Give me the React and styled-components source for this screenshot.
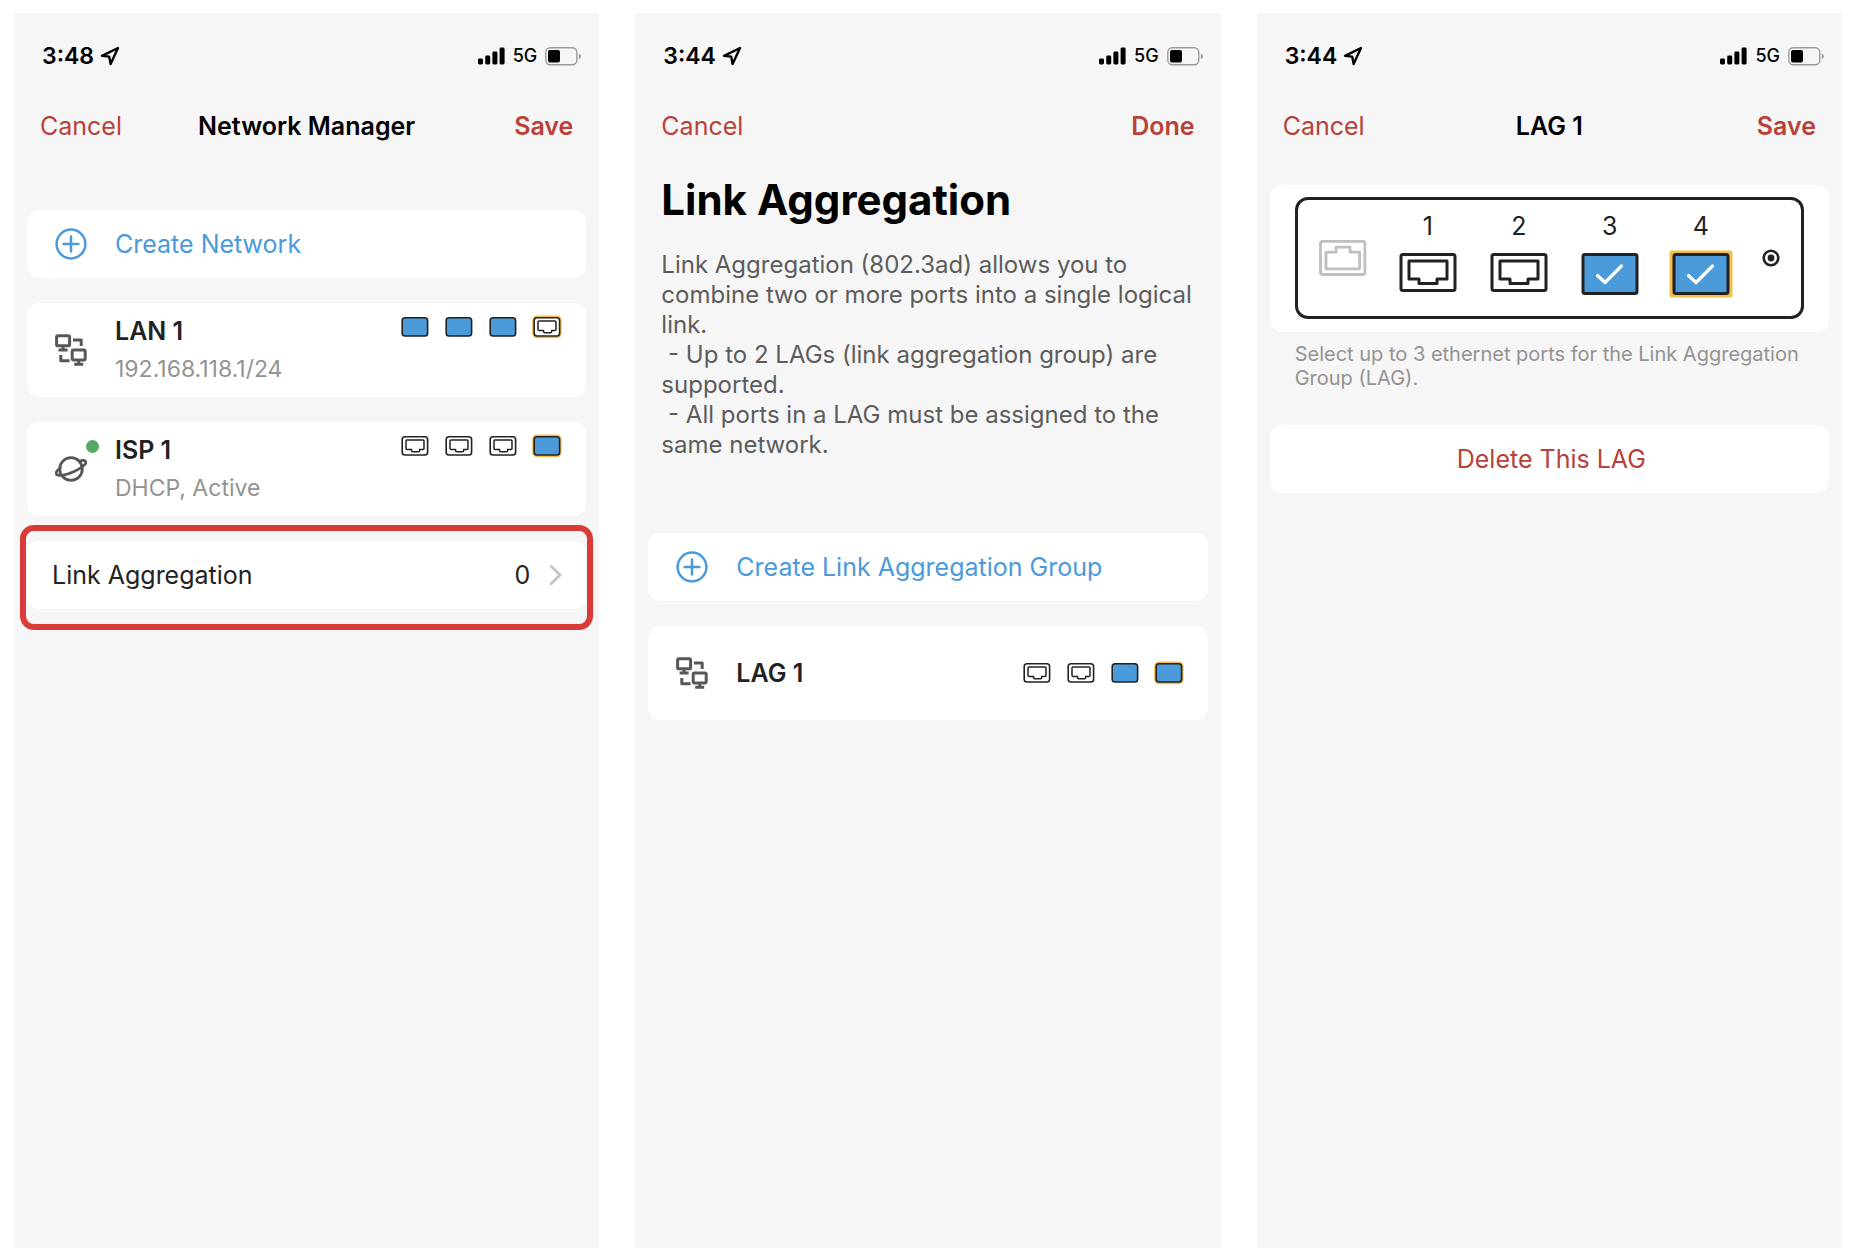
import React, { useState } from 'react'
import styled, { createGlobalStyle, ThemeProvider } from 'styled-components'

const theme = {
    surface: '#f6f6f6',
    card: '#ffffff',
    ink: '#222222',
    body: '#5c5c5c',
    muted: '#939393',
    icon: '#575757',
    red: '#b8413a',
    blue: '#4b9ada',
    yellow: '#f5bd4a',
    green: '#56a867',
    highlight: '#da3a38',
}

const GlobalStyle = createGlobalStyle`
    *, *::before, *::after {
        box-sizing: border-box;
    }
    body {
        margin: 0;
        background: #fff;
        font-family: Inter, 'Liberation Sans', sans-serif;
        font-size: 25px;
        line-height: 30px;
    }
    button {
        font: inherit;
        color: inherit;
        text-align: left;
        border: 0;
        padding: 0;
        background: none;
        cursor: pointer;
    }
    svg {
        display: block;
        flex: none;
    }
`

const Page = styled.main`
    display: grid;
    grid-template-columns: repeat(3, minmax(0, 1fr));
    gap: 36px;
    min-height: 100vh;
    padding: 13px 14px 0;
`

const Phone = styled.section`
    display: flex;
    flex-direction: column;
    background: ${props => props.theme.surface};
    color: ${props => props.theme.ink};
`

const StatusRow = styled.div`
    display: flex;
    align-items: center;
    justify-content: space-between;
    height: 86px;
    padding: 0 18px 0 28px;
    color: #000;
`

const Clock = styled.div`
    display: flex;
    align-items: center;
    gap: 6px;
    font-size: 23px;
    font-weight: 600;
`

const Signal = styled.div`
    display: flex;
    align-items: center;
    gap: 8px;
    font-size: 18px;
    font-weight: 500;
`

const NavBar = styled.header`
    display: grid;
    grid-template-columns: 1fr auto 1fr;
    align-items: center;
    height: 54px;
    padding: 0 26px;
`

const NavTitle = styled.h2`
    margin: 0;
    font-size: 25px;
    font-weight: 600;
    color: #000;
`

const NavButton = styled.button`
    justify-self: ${props => (props.$strong ? 'end' : 'start')};
    font-weight: ${props => (props.$strong ? 600 : 400)};
    color: ${props => props.theme.red};
`

const Content = styled.div`
    display: flex;
    flex-direction: column;
    gap: 25px;
    padding: ${props => props.$top}px 13px 0;
`

const Card = styled.div`
    border-radius: 12px;
    background: ${props => props.theme.card};
`

const RowButton = styled(Card).attrs({ as: 'button', type: 'button' })`
    display: flex;
    align-items: center;
    gap: 28px;
    width: 100%;
    min-height: ${props => (props.$tall ? 94 : 68)}px;
    padding: 0 24px 0 28px;
    color: ${props => (props.$accent ? props.theme.blue : props.theme.ink)};
`

const CountRow = styled(RowButton)`
    justify-content: space-between;
    padding-left: 25px;
`

const Count = styled.span`
    display: flex;
    align-items: center;
    gap: 19px;
`

const DeleteRow = styled(RowButton)`
    justify-content: center;
    color: ${props => props.theme.red};
`

const IconSlot = styled.span`
    position: relative;
`

const StatusDot = styled.span`
    position: absolute;
    top: -13px;
    right: -12px;
    width: 13px;
    height: 13px;
    border-radius: 50%;
    background: ${props => props.theme.green};
`

const RowText = styled.span`
    display: flex;
    flex: 1;
    flex-direction: column;
    gap: 8px;
`

const RowTitle = styled.span`
    font-weight: 600;
`

const RowSub = styled.span`
    font-size: 23px;
    color: ${props => props.theme.muted};
`

const PortList = styled.span`
    display: flex;
    gap: 14px;
    align-self: ${props => (props.$top ? 'flex-start' : 'center')};
    padding-top: ${props => (props.$top ? 12 : 0)}px;
`

const Highlight = styled.div`
    position: relative;
    &::after {
        content: '';
        position: absolute;
        inset: -16px -7px -21px;
        border: 6px solid ${props => props.theme.highlight};
        border-radius: 14px;
        pointer-events: none;
    }
`

const Intro = styled.div`
    padding: 23px 26px 48px;
`

const BigTitle = styled.h1`
    margin: 0 0 26px;
    font-size: 42px;
    line-height: 48px;
    font-weight: 700;
    color: #000;
`

const IntroText = styled.p`
    margin: 0;
    font-size: 24px;
    white-space: pre-line;
    color: ${props => props.theme.body};
`

const DeviceCard = styled(Card)`
    padding: 12px 25px 13px;
`

const Device = styled.fieldset`
    display: flex;
    align-items: center;
    justify-content: space-between;
    min-width: 0;
    height: 122px;
    margin: 0;
    padding: 0 21px;
    border: 3px solid ${props => props.theme.ink};
    border-radius: 13px;
`

const DevicePorts = styled.div`
    display: flex;
    gap: 27px;
    padding-bottom: 8px;
`

const PortToggle = styled.label`
    display: flex;
    flex-direction: column;
    align-items: center;
    gap: 9px;
    cursor: pointer;
`

const HiddenCheck = styled.input`
    position: absolute;
    opacity: 0;
    width: 1px;
    height: 1px;
    margin: 0;
`

const Hint = styled.p`
    margin: -15px 25px 10px;
    font-size: 20px;
    line-height: 24px;
    color: ${props => props.theme.muted};
`

function StatusBar({ time }) {
    return (
        <StatusRow>
            <Clock>
                <span>{time}</span>
                <svg width="20" height="20" viewBox="0 0 20 20" fill="none" stroke="#000" strokeWidth="2.4" strokeLinejoin="round">
                    <path d="M18 2 L2 9.8 L9.2 10.6 L10.6 18 Z" />
                </svg>
            </Clock>
            <Signal>
                <svg width="27" height="18" viewBox="0 0 27 18" fill="#000">
                    <rect x="0" y="11.5" width="5" height="6" rx="1.4" />
                    <rect x="7.2" y="8.5" width="5" height="9" rx="1.4" />
                    <rect x="14.4" y="4.5" width="5" height="13" rx="1.4" />
                    <rect x="21.6" y="0.5" width="5" height="17" rx="1.4" />
                </svg>
                <span>5G</span>
                <svg width="36" height="19" viewBox="0 0 36 19">
                    <rect x="0.8" y="0.8" width="31" height="17" rx="4.5" fill="none" stroke="#9c9c9c" strokeWidth="1.4" />
                    <rect x="3" y="3" width="12" height="12.6" rx="2" fill="#000" />
                    <path d="M33.8 6.4 Q36 7.4 36 9.3 Q36 11.2 33.8 12.2 Z" fill="#9c9c9c" />
                </svg>
            </Signal>
        </StatusRow>
    )
}

function Nav({ title, action }) {
    return (
        <NavBar>
            <NavButton type="button">Cancel</NavButton>
            {title ? <NavTitle>{title}</NavTitle> : <span />}
            <NavButton type="button" $strong>{action}</NavButton>
        </NavBar>
    )
}

function PlusIcon() {
    return (
        <svg width="32" height="32" viewBox="0 0 32 32" fill="none" stroke={theme.blue} strokeWidth="2.5" strokeLinecap="round">
            <circle cx="16" cy="16" r="14.4" />
            <path d="M16 8.6V23.4M8.6 16H23.4" />
        </svg>
    )
}

function NetworkIcon() {
    return (
        <svg width="32" height="32" viewBox="0 0 32 32" fill="none" stroke={theme.icon} strokeWidth="3" strokeLinejoin="round">
            <rect x="1.6" y="1.8" width="13" height="10" rx="1.4" />
            <path d="M8 11.8V15.6M3.6 16H12.6" />
            <rect x="17.2" y="16" width="13" height="10" rx="1.4" />
            <path d="M23.7 26V30M19.2 30.2H28.2" />
            <path d="M18 6H26.2V12M5.8 21V26.8H14.6" />
        </svg>
    )
}

function PlanetIcon() {
    return (
        <svg width="32" height="32" viewBox="0 0 32 32" fill="none" stroke={theme.icon} strokeWidth="2.8" strokeLinecap="round" strokeLinejoin="round">
            <circle cx="16" cy="16" r="11.3" />
            <path d="M5.2 15.2 C1.6 17.6 0.4 20 1.6 21.4 C3.8 23.4 11.6 22 18.6 18.8 C26.8 15 32 10.6 30.8 8.6 C29.8 7 27.6 7.2 24.6 8.2" />
        </svg>
    )
}

function ChevronIcon() {
    return (
        <svg width="13" height="22" viewBox="0 0 13 22" fill="none" stroke="#c4c4c6" strokeWidth="2.8">
            <path d="M1.4 1.4 L11 11 L1.4 20.6" />
        </svg>
    )
}

function SmallPort({ filled, uplink }) {
    return (
        <svg width="30" height="24" viewBox="0 0 30 24" fill="none" strokeLinejoin="round">
            {uplink && <rect x="0.2" y="0.6" width="29.4" height="22.6" rx="4.6" fill={theme.yellow} />}
            <rect x="2.2" y="2.8" width="25.4" height="18.2" rx="2.8" fill={filled ? theme.blue : '#fff'} stroke={theme.ink} strokeWidth="1.6" />
            {!filled && (
                <path d="M7 6H23Q24 6 24 7V14.6Q24 15.6 23 15.6H19.6V16.8Q19.6 17.8 18.6 17.8H12.6Q11.6 17.8 11.6 16.8V15.6H7Q6 15.6 6 14.6V7Q6 6 7 6Z" stroke={theme.ink} strokeWidth="1.5" />
            )}
        </svg>
    )
}

function Ports({ ports, top }) {
    return (
        <PortList $top={top}>
            {ports.map((filled, i) => (
                <SmallPort key={i} filled={filled} uplink={i === ports.length - 1} />
            ))}
        </PortList>
    )
}

function DevicePort({ number, checked, uplink, onChange }) {
    return (
        <PortToggle>
            <span>{number}</span>
            <HiddenCheck type="checkbox" checked={checked} onChange={onChange} />
            <svg width="64" height="48" viewBox="0 0 64 48" fill="none" strokeLinejoin="round" strokeLinecap="round">
                {uplink && <rect x="0.5" y="0.5" width="63" height="47" rx="2.5" fill={theme.yellow} />}
                <rect x="5" y="4.5" width="54" height={checked ? 39 : 36} rx="2" fill={checked ? theme.blue : '#fff'} stroke={theme.ink} strokeWidth="3" />
                {checked ? (
                    <path d="M19.5 25.5L27 32.5L43.5 16" stroke="#fff" strokeWidth="3.2" />
                ) : (
                    <path d="M13 11H51V29H41V33.5H23V29H13Z" stroke={theme.ink} strokeWidth="3" />
                )}
            </svg>
        </PortToggle>
    )
}

function NetworkManager() {
    return (
        <Phone>
            <StatusBar time="3:48" />
            <Nav title="Network Manager" action="Save" />
            <Content $top={57}>
                <RowButton $accent>
                    <PlusIcon />
                    <span>Create Network</span>
                </RowButton>
                <RowButton $tall>
                    <NetworkIcon />
                    <RowText>
                        <RowTitle>LAN 1</RowTitle>
                        <RowSub>192.168.118.1/24</RowSub>
                    </RowText>
                    <Ports top ports={[true, true, true, false]} />
                </RowButton>
                <RowButton $tall>
                    <IconSlot>
                        <PlanetIcon />
                        <StatusDot />
                    </IconSlot>
                    <RowText>
                        <RowTitle>ISP 1</RowTitle>
                        <RowSub>DHCP, Active</RowSub>
                    </RowText>
                    <Ports top ports={[false, false, false, true]} />
                </RowButton>
                <Highlight>
                    <CountRow>
                        <span>Link Aggregation</span>
                        <Count>
                            <span>0</span>
                            <ChevronIcon />
                        </Count>
                    </CountRow>
                </Highlight>
            </Content>
        </Phone>
    )
}

const introText = `Link Aggregation (802.3ad) allows you to combine two or more ports into a single logical link.
\u00a0- Up to 2 LAGs (link aggregation group) are supported.
\u00a0- All ports in a LAG must be assigned to the same network.`

function LinkAggregation() {
    return (
        <Phone>
            <StatusBar time="3:44" />
            <Nav action="Done" />
            <Intro>
                <BigTitle>Link Aggregation</BigTitle>
                <IntroText>{introText}</IntroText>
            </Intro>
            <Content $top={25}>
                <RowButton $accent>
                    <PlusIcon />
                    <span>Create Link Aggregation Group</span>
                </RowButton>
                <RowButton $tall>
                    <NetworkIcon />
                    <RowText>
                        <RowTitle>LAG 1</RowTitle>
                    </RowText>
                    <Ports ports={[false, false, true, true]} />
                </RowButton>
            </Content>
        </Phone>
    )
}

function LagDetail() {
    const [selected, setSelected] = useState([3, 4])

    const toggle = port => {
        setSelected(selected.includes(port) ? selected.filter(p => p !== port) : [...selected, port])
    }

    return (
        <Phone>
            <StatusBar time="3:44" />
            <Nav title="LAG 1" action="Save" />
            <Content $top={32}>
                <DeviceCard>
                    <Device aria-label="Ethernet ports">
                        <svg width="48" height="36" viewBox="0 0 48 36" fill="none" stroke="#bfbfbf" strokeWidth="2.8" strokeLinejoin="round">
                            <rect x="1.5" y="1.3" width="44.4" height="33.2" rx="2" />
                            <path d="M7 28.8V12.2H17V7.2H31V12.2H40.6V28.8Z" />
                        </svg>
                        <DevicePorts>
                            {[1, 2, 3, 4].map(port => (
                                <DevicePort
                                    key={port}
                                    number={port}
                                    uplink={port === 4}
                                    checked={selected.includes(port)}
                                    onChange={() => toggle(port)}
                                />
                            ))}
                        </DevicePorts>
                        <svg width="18" height="18" viewBox="0 0 18 18">
                            <circle cx="9" cy="9" r="7.3" fill="none" stroke={theme.ink} strokeWidth="2.6" />
                            <circle cx="9" cy="9" r="3.4" fill={theme.ink} />
                        </svg>
                    </Device>
                </DeviceCard>
                <Hint>Select up to 3 ethernet ports for the Link Aggregation Group (LAG).</Hint>
                <DeleteRow>Delete This LAG</DeleteRow>
            </Content>
        </Phone>
    )
}

function App() {
    return (
        <ThemeProvider theme={theme}>
            <GlobalStyle />
            <Page>
                <NetworkManager />
                <LinkAggregation />
                <LagDetail />
            </Page>
        </ThemeProvider>
    )
}

export default App
